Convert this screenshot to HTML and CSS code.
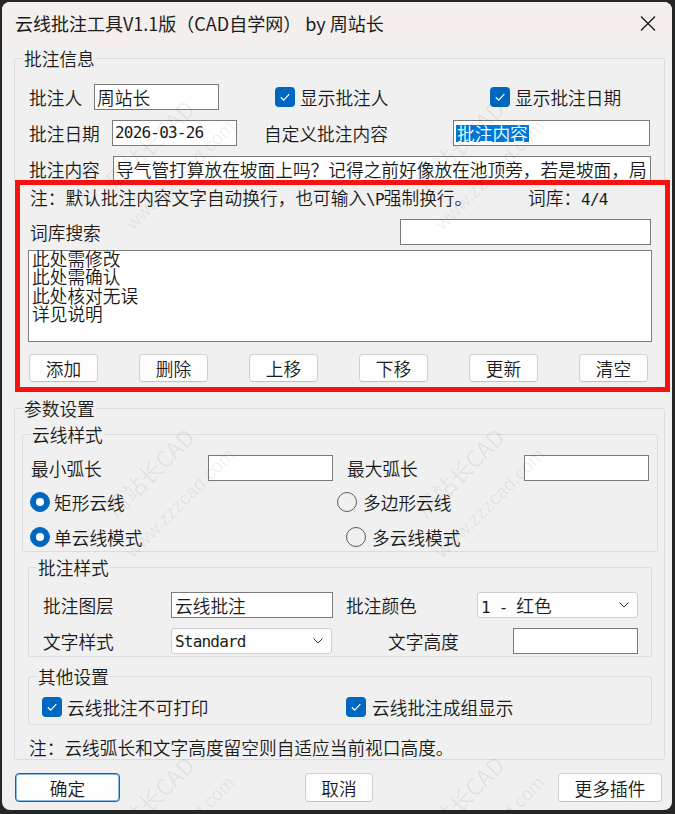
FILE: index.html
```html
<!DOCTYPE html>
<html lang="zh-CN">
<head>
<meta charset="utf-8">
<title>云线批注工具</title>
<link rel="stylesheet" href="styles.css">
</head>
<body>
<div class="window">
  <div class="titlebar">
    <span class="title">云线批注工具V1.1版（CAD自学网） by 周站长</span>
    <svg class="close" viewBox="0 0 16 15"><path d="M1 0.5 L15 14.5 M15 0.5 L1 14.5" stroke="#1b1b1b" stroke-width="1.3" fill="none"/></svg>
  </div>
  <div class="client">
    <div class="group g-info">
      <div class="gtitle">批注信息</div>
      <div class="row r1">
        <span class="lbl w65">批注人</span>
        <div class="input w125">周站长</div>
        <span class="check ml56"><svg viewBox="0 0 20 20"><path d="M5.8 10.3 L8.7 13.1 L14.3 7.2" stroke="#fff" stroke-width="1.2" fill="none"/></svg></span>
        <span class="lbl ml5 w190">显示批注人</span>
        <span class="check"><svg viewBox="0 0 20 20"><path d="M5.8 10.3 L8.7 13.1 L14.3 7.2" stroke="#fff" stroke-width="1.2" fill="none"/></svg></span>
        <span class="lbl ml5">显示批注日期</span>
      </div>
      <div class="row r2">
        <span class="lbl w83">批注日期</span>
        <div class="input w125 pl3"><span class="lat">2026-03-26</span></div>
        <span class="lbl ml27 w189">自定义批注内容</span>
        <div class="input w197 pl3"><span class="sel">批注内容</span></div>
      </div>
      <div class="row r3">
        <span class="lbl w84">批注内容</span>
        <div class="input w538 pl3">导气管打算放在坡面上吗？记得之前好像放在池顶旁，若是坡面，局</div>
      </div>
    </div>

    <div class="redbox">
      <div class="row note-row">
        <span class="lbl w498">注：默认批注内容文字自动换行，也可输入<span class="lat">\P</span>强制换行。</span>
        <span class="lbl">词库：<span class="lat">4/4</span></span>
      </div>
      <div class="row search-row">
        <span class="lbl w370">词库搜索</span>
        <div class="input w251"></div>
      </div>
      <div class="listbox">
        <div>此处需修改</div>
        <div>此处需确认</div>
        <div>此处核对无误</div>
        <div>详见说明</div>
      </div>
      <div class="btnrow">
        <div class="btn">添加</div>
        <div class="btn">删除</div>
        <div class="btn">上移</div>
        <div class="btn">下移</div>
        <div class="btn">更新</div>
        <div class="btn">清空</div>
      </div>
    </div>

    <div class="group g-param">
      <div class="gtitle">参数设置</div>

      <div class="group sub1">
        <div class="gtitle">云线样式</div>
        <div class="row arc-row">
          <span class="lbl w177">最小弧长</span>
          <div class="input w125"></div>
          <span class="lbl ml14 w177">最大弧长</span>
          <div class="input w125"></div>
        </div>
        <div class="row radio-row rr1">
          <span class="radio on"><span class="dot"></span></span>
          <span class="lbl ml4 w283">矩形云线</span>
          <span class="radio"></span>
          <span class="lbl ml6">多边形云线</span>
        </div>
        <div class="row radio-row rr2">
          <span class="radio on"><span class="dot"></span></span>
          <span class="lbl ml4 w292">单云线模式</span>
          <span class="radio"></span>
          <span class="lbl ml6">多云线模式</span>
        </div>
      </div>

      <div class="group sub2">
        <div class="gtitle">批注样式</div>
        <div class="row style-row1">
          <span class="lbl w128">批注图层</span>
          <div class="input w162 pl4">云线批注</div>
          <span class="lbl ml13 w131">批注颜色</span>
          <div class="combo w161"><span><span class="lat">1 - </span>红色</span><svg class="chev" viewBox="0 0 10 6"><path d="M0.5 0.5 L5 5 L9.5 0.5" stroke="#333" stroke-width="1" fill="none"/></svg></div>
        </div>
        <div class="row style-row2">
          <span class="lbl w128">文字样式</span>
          <div class="combo w161"><span class="lat">Standard</span><svg class="chev" viewBox="0 0 10 6"><path d="M0.5 0.5 L5 5 L9.5 0.5" stroke="#333" stroke-width="1" fill="none"/></svg></div>
          <span class="lbl ml56 w125">文字高度</span>
          <div class="input w125"></div>
        </div>
      </div>

      <div class="group sub3">
        <div class="gtitle">其他设置</div>
        <div class="row other-row">
          <span class="check"><svg viewBox="0 0 20 20"><path d="M5.8 10.3 L8.7 13.1 L14.3 7.2" stroke="#fff" stroke-width="1.2" fill="none"/></svg></span>
          <span class="lbl ml5 w279">云线批注不可打印</span>
          <span class="check"><svg viewBox="0 0 20 20"><path d="M5.8 10.3 L8.7 13.1 L14.3 7.2" stroke="#fff" stroke-width="1.2" fill="none"/></svg></span>
          <span class="lbl ml6">云线批注成组显示</span>
        </div>
      </div>

      <div class="param-note">注：云线弧长和文字高度留空则自适应当前视口高度。</div>
    </div>

    <div class="footer">
      <div class="btn ok">确定</div>
      <div class="btn cancel">取消</div>
      <div class="btn more">更多插件</div>
    </div>
  </div>

  <div class="wm wm1"><b>周站长CAD</b><i>www.zzzcad.com</i></div>
  <div class="wm wm2"><b>周站长CAD</b><i>www.zzzcad.com</i></div>
  <div class="wm wm3"><b>周站长CAD</b><i>www.zzzcad.com</i></div>
  <div class="wm wm4"><b>周站长CAD</b><i>www.zzzcad.com</i></div>
  <div class="wm wm5"><b>周站长CAD</b><i>www.zzzcad.com</i></div>
  <div class="wm wm6"><b>周站长CAD</b><i>www.zzzcad.com</i></div>
</div>
</body>
</html>
```

FILE: styles.css
```css
* { box-sizing: border-box; }
html, body { margin: 0; padding: 0; }
body {
  background: #262626;
  width: 675px;
  height: 814px;
  overflow: hidden;
  font-family: "Noto Sans CJK SC", sans-serif;
  font-size: 17.7px;
  font-weight: 350;
  color: #1a1a1a;
}
.window {
  position: relative;
  margin: 2px 0 0 2px;
  width: 670px;
  height: 808px;
  border-radius: 8px;
  overflow: hidden;
  background: #f0f0f0;
}
.titlebar {
  height: 44px;
  background: #f4efed;
  display: flex;
  align-items: center;
  padding: 0 0 2px 13px;
  font-size: 18px;
  font-weight: 400;
  line-height: 1;
}
.title { flex: 1; color: #1b1b1b; white-space: nowrap; }
.close { width: 16px; height: 15px; margin-right: 16px; }

.client { display: flex; flex-direction: column; align-items: flex-start; }

.group { border: 1px solid #dcdcdc; border-radius: 3px; }
.gtitle {
  margin: -11px 0 0 8px;
  padding: 0 1px;
  height: 20px;
  line-height: 20px;
  background: #f0f0f0;
  width: max-content;
}
.row { display: flex; align-items: center; height: 26px; }
.lbl { flex: none; white-space: nowrap; line-height: 20px; }
.lat {
  font-family: "DejaVu Sans Mono", monospace;
  font-size: 16px;
  letter-spacing: -0.8px;
  font-weight: 400;
}

.input {
  flex: none;
  height: 26px;
  background: #fff;
  border: 1px solid #7a7a7a;
  padding: 0 2px;
  display: flex;
  align-items: center;
  overflow: hidden;
  white-space: nowrap;
  line-height: 20px;
}
.pl3 { padding-left: 2px; }
.pl4 { padding-left: 3px; }
.sel { background: #0078d7; color: #fff; line-height: 17px; padding: 0 1px; }

.combo {
  flex: none;
  height: 26px;
  background: #fdfdfd;
  border: 1px solid #cfcfcf;
  border-radius: 3px;
  display: flex;
  align-items: center;
  justify-content: space-between;
  padding: 0 8px 0 3px;
  white-space: nowrap;
}
.chev { width: 10px; height: 6px; }

.check {
  flex: none;
  width: 20px;
  height: 20px;
  border-radius: 4px;
  background: #0067c0;
  display: flex;
}
.check svg { width: 20px; height: 20px; }
.radio {
  flex: none;
  width: 20px;
  height: 20px;
  border-radius: 50%;
  border: 1px solid #5c5c5c;
  display: flex;
  align-items: center;
  justify-content: center;
}
.radio.on { background: #0067c0; border-color: #0067c0; }
.dot { width: 8px; height: 8px; border-radius: 50%; background: #fff; }

.btn {
  flex: none;
  height: 28px;
  width: 69px;
  border: 1px solid #d0d0d0;
  border-bottom-color: #c2c2c2;
  border-radius: 4px;
  background: #fdfdfd;
  display: flex;
  align-items: center;
  justify-content: center;
  line-height: 20px;
}

/* widths and margins */
.w65 { width: 65px; } .w83 { width: 83px; } .w84 { width: 84px; }
.w125 { width: 125px; } .w128 { width: 128px; } .w131 { width: 131px; }
.w161 { width: 161px; } .w162 { width: 162px; } .w177 { width: 177px; }
.w189 { width: 189px; } .w190 { width: 190px; } .w197 { width: 197px; }
.w251 { width: 251px; } .w279 { width: 279px; } .w283 { width: 283px; }
.w292 { width: 292px; } .w370 { width: 370px; } .w498 { width: 498px; }
.w538 { width: 538px; }
.ml4 { margin-left: 4px; } .ml5 { margin-left: 5px; } .ml6 { margin-left: 6px; }
.ml13 { margin-left: 13px; } .ml14 { margin-left: 14px; } .ml27 { margin-left: 27px; }
.ml56 { margin-left: 56px; }

/* group 1 */
.g-info {
  margin: 12px 0 0 12px;
  width: 651px;
  border-bottom: none;
  border-radius: 3px 3px 0 0;
}
.r1 { margin-top: 16px; padding-left: 14px; }
.r2 { margin-top: 10px; padding-left: 14px; }
.r3 { margin-top: 10px; padding-left: 14px; }

/* red annotation */
.redbox {
  position: relative;
  z-index: 1;
  margin: -2px 0 0 13px;
  width: 655px;
  height: 212px;
  border: 5px solid #f71212;
}
.note-row { padding-left: 10px; }
.search-row { margin-top: 8px; padding-left: 10px; }
.listbox {
  margin: 5px 0 0 8px;
  width: 624px;
  height: 92px;
  background: #fff;
  border: 1px solid #7a7a7a;
  padding: 0 3px;
  line-height: 18.3px;
}
.listbox div { position: relative; top: -2px; }
.btnrow { display: flex; gap: 41px; margin: 12px 0 0 9px; }

/* group 2 */
.g-param { margin: 16px 0 0 12px; width: 651px; padding-bottom: 1px; }
.sub1 { margin: 16px 0 0 7px; width: 636px; padding-bottom: 4px; }
.arc-row { margin-top: 11px; padding-left: 8px; }
.radio-row { height: 20px; padding-left: 7px; }
.rr1 { margin-top: 11px; }
.rr2 { margin-top: 15px; }
.sub2 { margin: 15px 0 0 13px; width: 624px; padding-bottom: 2px; }
.style-row1 { margin-top: 15px; padding-left: 14px; }
.style-row2 { margin-top: 10px; padding-left: 14px; }
.sub3 { margin: 19px 0 0 13px; width: 624px; padding-bottom: 7px; }
.other-row { height: 20px; margin-top: 11px; padding-left: 13px; }
.param-note { margin: 11px 0 0 14px; height: 22px; line-height: 22px; }

/* footer */
.footer { display: flex; margin: 13px 0 0 13px; }
.footer .btn { height: 29px; }
.ok { width: 105px; border: 1px solid #0067c0; box-shadow: inset 0 0 0 1px rgba(0, 103, 192, 0.45); }
.cancel { width: 68px; margin-left: 185px; }
.more { width: 104px; margin-left: 185px; }

/* watermark overlay */
.wm {
  position: absolute;
  z-index: 5;
  transform: translate(-50%, -50%) rotate(-45deg);
  color: rgba(0, 0, 0, 0.07);
  text-align: center;
  pointer-events: none;
  white-space: nowrap;
  line-height: 1;
}
.wm b { display: block; font-weight: 400; font-size: 23px; }
.wm i { display: block; font-style: normal; font-size: 19px; margin-top: 22px; font-family: "Liberation Sans", sans-serif; }
.wm1 { left: 162px; top: 157px; }
.wm2 { left: 472px; top: 157px; }
.wm3 { left: 162px; top: 485px; }
.wm4 { left: 472px; top: 485px; }
.wm5 { left: 162px; top: 813px; }
.wm6 { left: 472px; top: 813px; }
```
